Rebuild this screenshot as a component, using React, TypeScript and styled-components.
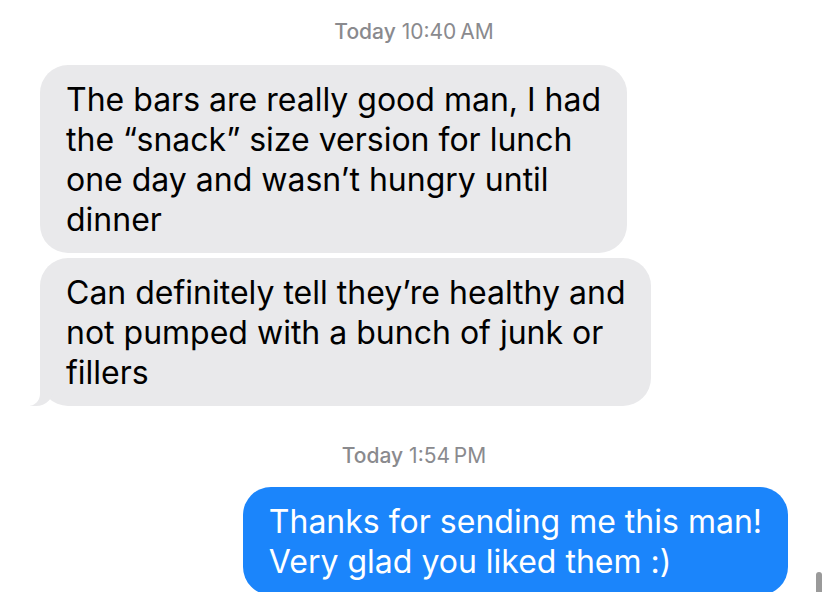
import React from 'react'
import { styled, createGlobalStyle, css } from 'styled-components'

const GlobalStyle = createGlobalStyle`
  html, body {
    margin: 0;
    padding: 0;
    background: #ffffff;
  }
  body {
    font-family: "Inter", "Noto Sans", "Liberation Sans", sans-serif;
    -webkit-font-smoothing: antialiased;
  }
`

type Message = {
  lines: string[]
  tail?: boolean
}

const incoming: Message[] = [
  {
    lines: [
      'The bars are really good man, I had',
      'the \u201csnack\u201d size version for lunch',
      'one day and wasn\u2019t hungry until',
      'dinner',
    ],
  },
  {
    lines: [
      'Can definitely tell they\u2019re healthy and',
      'not pumped with a bunch of junk or',
      'fillers',
    ],
    tail: true,
  },
]

const outgoing: Message[] = [
  { lines: ['Thanks for sending me this man!', 'Very glad you liked them :)'] },
]

const App = () => {
  return (
    <>
      <GlobalStyle />
      <StyledThread>
        <StyledStamp>
          <b>Today</b> 10:40&#8239;AM
        </StyledStamp>
        <StyledGroup>
          {incoming.map((msg, i) => (
            <StyledBubble key={i} $mine={false} $tail={msg.tail}>
              {msg.lines.map((line) => (
                <StyledLine key={line}>{line}</StyledLine>
              ))}
            </StyledBubble>
          ))}
        </StyledGroup>
        <StyledStamp $gap>
          <b>Today</b> 1:54&#8239;PM
        </StyledStamp>
        <StyledGroup $mine>
          {outgoing.map((msg, i) => (
            <StyledBubble key={i} $mine>
              {msg.lines.map((line) => (
                <StyledLine key={line}>{line}</StyledLine>
              ))}
            </StyledBubble>
          ))}
        </StyledGroup>
      </StyledThread>
      <StyledScrollThumb />
    </>
  )
}

const StyledThread = styled.div`
  display: flex;
  flex-direction: column;
  height: 592px;
  overflow: hidden;
  padding: 20px 40px 0;
  box-sizing: border-box;
`

const StyledStamp = styled.div<{ $gap?: boolean }>`
  text-align: center;
  font-size: 21px;
  line-height: 24px;
  color: #8a8a8e;
  margin-top: ${(p) => (p.$gap ? '38px' : '0')};
  margin-bottom: ${(p) => (p.$gap ? '19px' : '21px')};
  b {
    font-weight: 500;
  }
`

const StyledGroup = styled.div<{ $mine?: boolean }>`
  display: flex;
  flex-direction: column;
  align-items: ${(p) => (p.$mine ? 'flex-end' : 'flex-start')};
  gap: 5px;
`

const StyledBubble = styled.div<{ $mine: boolean; $tail?: boolean }>`
  position: relative;
  padding: 15px 26px 13px 26px;
  border-radius: 28px;
  font-size: 32px;
  line-height: 40px;
  background: ${(p) => (p.$mine ? '#1b85fb' : '#e9e9eb')};
  color: ${(p) => (p.$mine ? '#ffffff' : '#000000')};
  ${(p) =>
    p.$tail &&
    css`
      &::before {
        content: '';
        position: absolute;
        left: -10px;
        bottom: 0;
        width: 24px;
        height: 28px;
        background: #e9e9eb;
        border-bottom-right-radius: 18px;
      }
      &::after {
        content: '';
        position: absolute;
        left: -22px;
        bottom: 0;
        width: 22px;
        height: 28px;
        background: #ffffff;
        border-bottom-right-radius: 12px;
      }
    `}
`

const StyledLine = styled.span`
  display: block;
  white-space: nowrap;
`

const StyledScrollThumb = styled.div`
  position: fixed;
  right: 6px;
  bottom: -6px;
  width: 6px;
  height: 26px;
  border-radius: 3px;
  background: #9a9a9a;
`

export default App
